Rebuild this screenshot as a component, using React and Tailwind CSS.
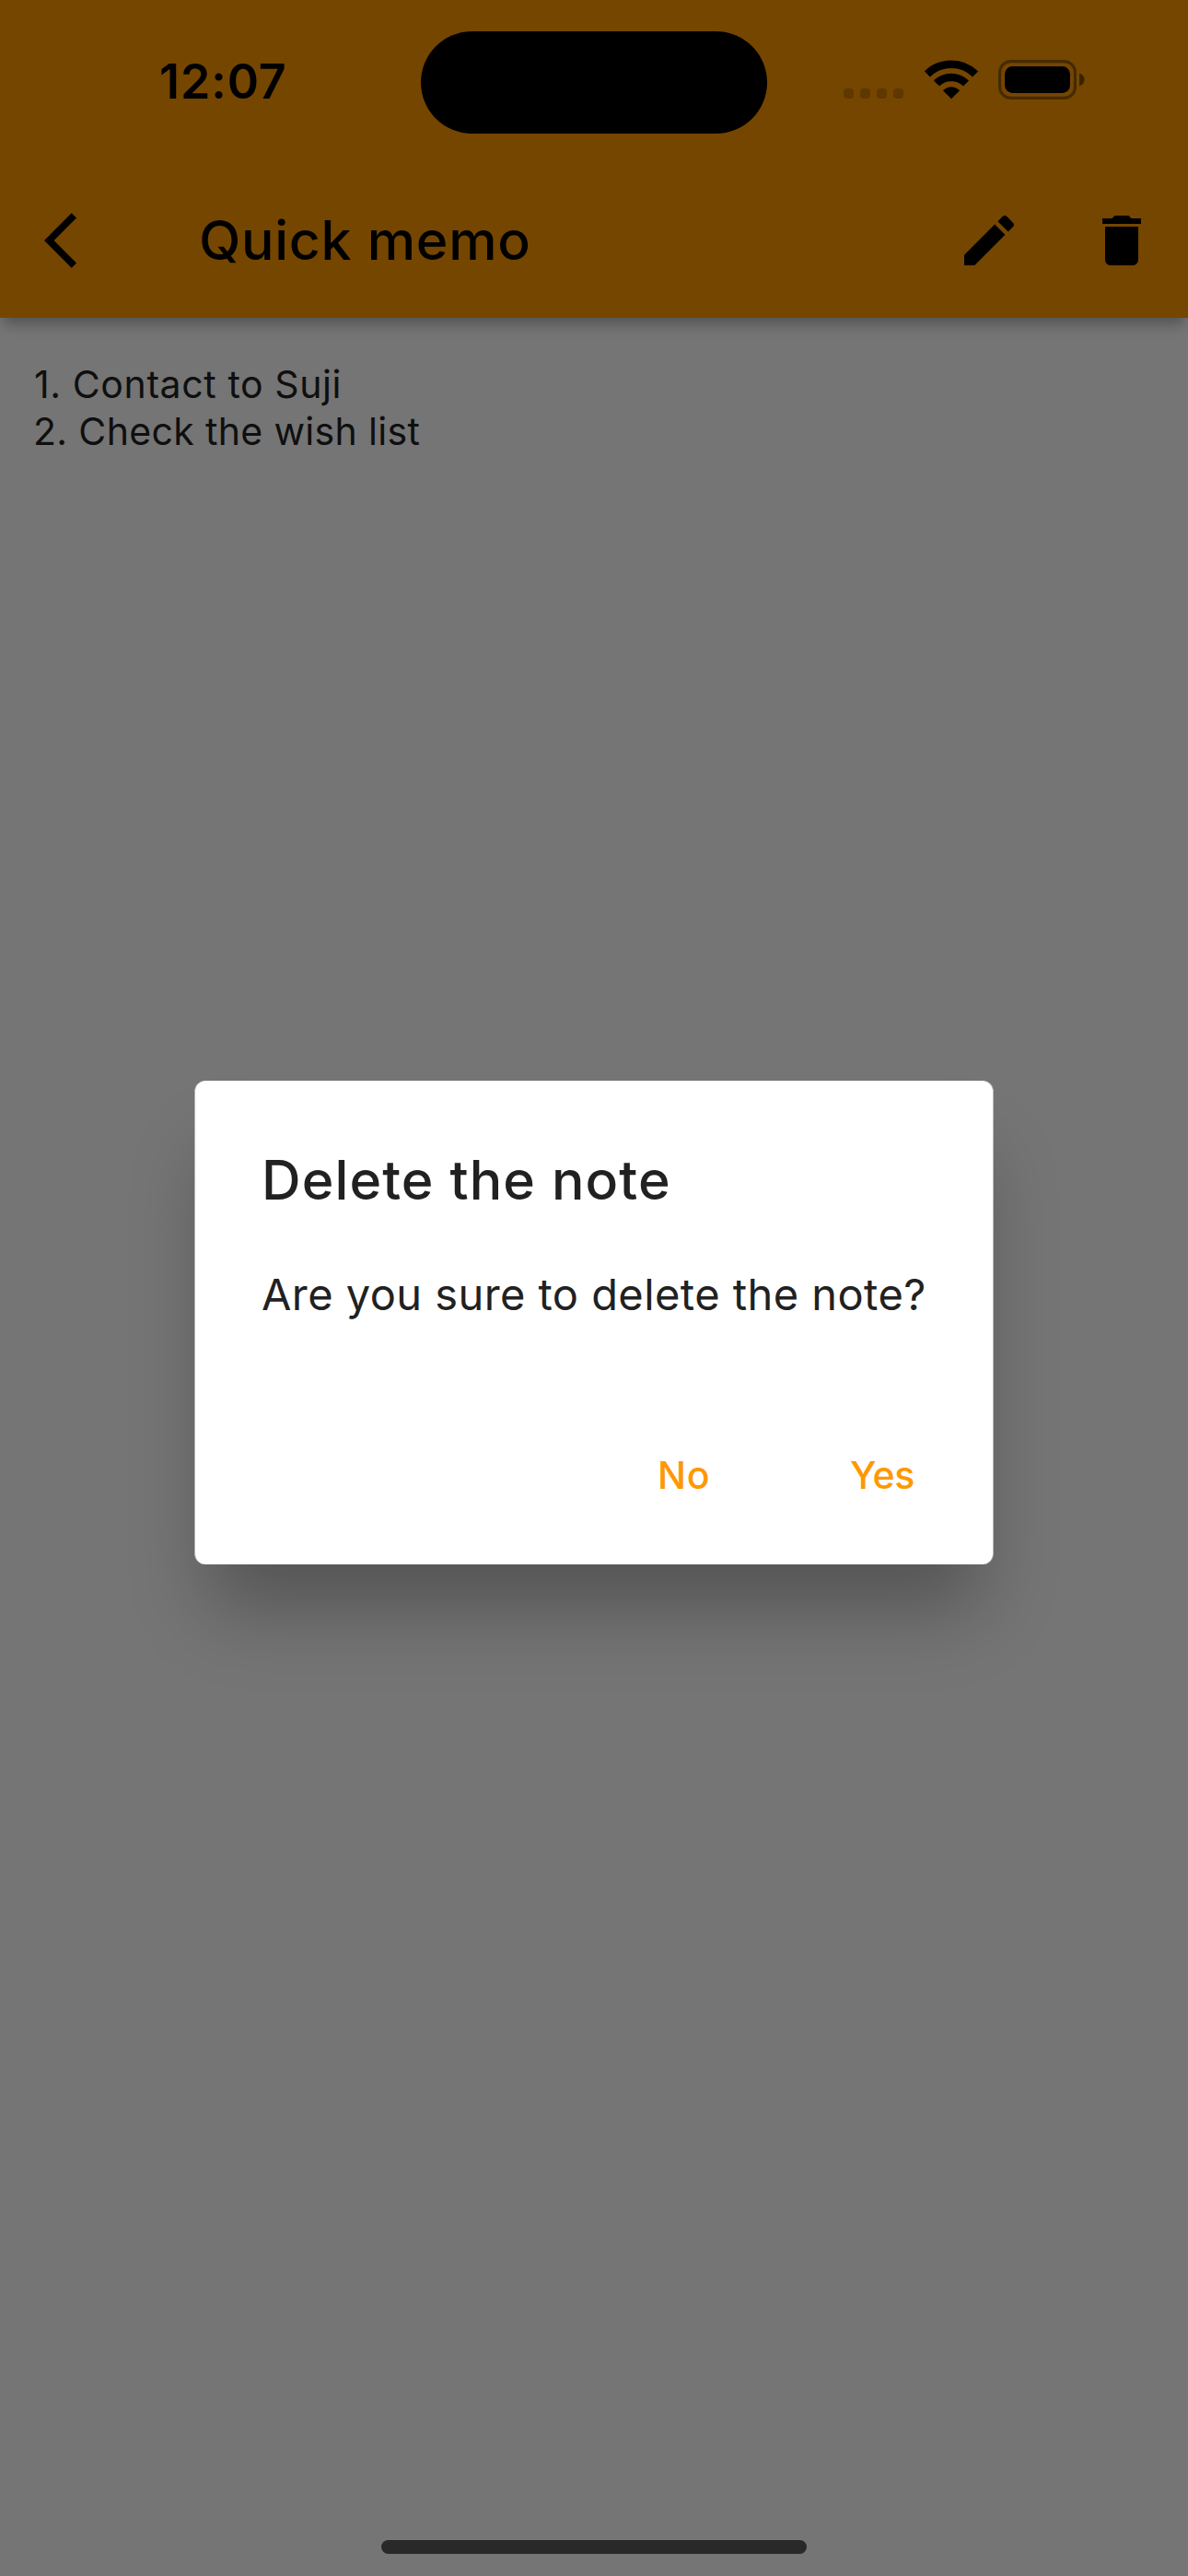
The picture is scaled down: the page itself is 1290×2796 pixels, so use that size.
import React from "react";

function StatusBar() {
  return (
    <div className="flex h-[177px] w-full">
      <div className="h-full w-[457px] pt-[54px] pl-[173px]">
        <span className="block text-[52px] leading-[70px] font-semibold tracking-[0.9px] whitespace-nowrap">12:07</span>
      </div>
      <div className="mt-[33.5px] h-[111px] w-[376px] rounded-full bg-black" />
      <div className="flex pt-[65px] pl-[83px]">
        <div className="mt-[31px] flex gap-[7px]">
          <i className="size-[11px] rounded-[4px] bg-black/20" />
          <i className="size-[11px] rounded-[4px] bg-black/20" />
          <i className="size-[11px] rounded-[4px] bg-black/20" />
          <i className="size-[11px] rounded-[4px] bg-black/20" />
        </div>
        <svg className="ml-[23px] h-[43px] w-[58px]" viewBox="0 0 58 43">
          <g fill="none" stroke="#000" strokeWidth="8.6">
            <path d="M2.9 15.4 A37.2 37.2 0 0 1 55.1 15.4" />
            <path d="M13 25.5 A22.8 22.8 0 0 1 45 25.5" />
          </g>
          <path d="M29 42.2 L20.2 33.4 Q20.2 32.8 20.9 32.2 A12.6 12.6 0 0 1 37.1 32.2 Q37.8 32.8 37.8 33.4 Z" />
        </svg>
        <svg className="ml-[22px] h-[43px] w-[94px]" viewBox="0 0 94 43">
          <rect x="1.6" y="1.6" width="81.8" height="39.8" rx="12" fill="none" stroke="#000" strokeOpacity="0.4" strokeWidth="3.2" />
          <rect x="7" y="7" width="71" height="29" rx="8.5" />
          <path d="M88 14.5 C91.6 15.8 93.6 18.4 93.6 21.5 C93.6 24.6 91.6 27.2 88 28.5 Z" fillOpacity="0.5" />
        </svg>
      </div>
    </div>
  );
}

function AppBar() {
  return (
    <div className="flex h-[168px] w-full items-center pr-9">
      <svg className="ml-12 size-[72px]" viewBox="0 0 24 24">
        <path d="M11.67 3.87L9.9 2.1 0 12l9.9 9.9 1.77-1.77L3.54 12z" />
      </svg>
      <h1 className="ml-24 flex-1 text-[59px] leading-[70px] font-medium tracking-[0.7px] whitespace-nowrap">Quick memo</h1>
      <svg className="size-[72px]" viewBox="0 0 24 24">
        <path d="M3 17.25V21h3.75L17.81 9.94l-3.75-3.75L3 17.25zM20.71 7.04c.39-.39.39-1.02 0-1.41l-2.34-2.34c-.39-.39-1.02-.39-1.41 0l-1.83 1.83 3.75 3.75 1.83-1.83z" />
      </svg>
      <svg className="ml-[72px] size-[72px]" viewBox="0 0 24 24">
        <path d="M6 19c0 1.1.9 2 2 2h8c1.1 0 2-.9 2-2V7H6v12zM19 4h-3.5l-1-1h-5l-1 1H5v2h14V4z" />
      </svg>
    </div>
  );
}

function DeleteDialog() {
  return (
    <section
      role="dialog"
      className="h-[525px] w-[868px] rounded-[12px] border-x border-[#b4b4b4] bg-white pt-[73px] text-[#212121] shadow-[0_64px_78px_-16px_rgba(0,0,0,0.28)]"
    >
      <h2 className="pl-[72px] text-[59px] leading-[70px] font-medium tracking-[1.12px] whitespace-nowrap">Delete the note</h2>
      <p className="mt-[61px] pl-[72px] text-[47px] leading-[56px] tracking-[0.44px] whitespace-nowrap">Are you sure to delete the note?</p>
      <div className="mt-[143px] flex justify-end pr-[84px] text-[41px] leading-[50px] font-medium text-[#ff9800]">
        <button className="w-[209px] text-left tracking-[0.8px]">No</button>
        <button className="w-[71px] text-left tracking-[-0.4px]">Yes</button>
      </div>
    </section>
  );
}

export default function App() {
  return (
    <div className="grid h-[2796px] w-[1290px] overflow-hidden bg-[#757575] font-[Inter,sans-serif] text-black">
      <div className="col-start-1 row-start-1 flex flex-col">
        <header className="bg-[#754600] shadow-[0_11px_13px_-4px_rgba(0,0,0,0.28)]">
          <StatusBar />
          <AppBar />
        </header>
        <main className="flex-1 pt-[47px] pl-9 text-[41px] leading-[51px] text-[#0f0f0f]">
          <p className="pl-px tracking-[0.6px]">1. Contact to Suji</p>
          <p className="tracking-[0.34px]">2. Check the wish list</p>
        </main>
        <div className="mb-6 h-[15px] w-[462px] self-center rounded-full bg-[#292929]" />
      </div>
      <div className="col-start-1 row-start-1 flex justify-center pt-[1173px]">
        <DeleteDialog />
      </div>
    </div>
  );
}
